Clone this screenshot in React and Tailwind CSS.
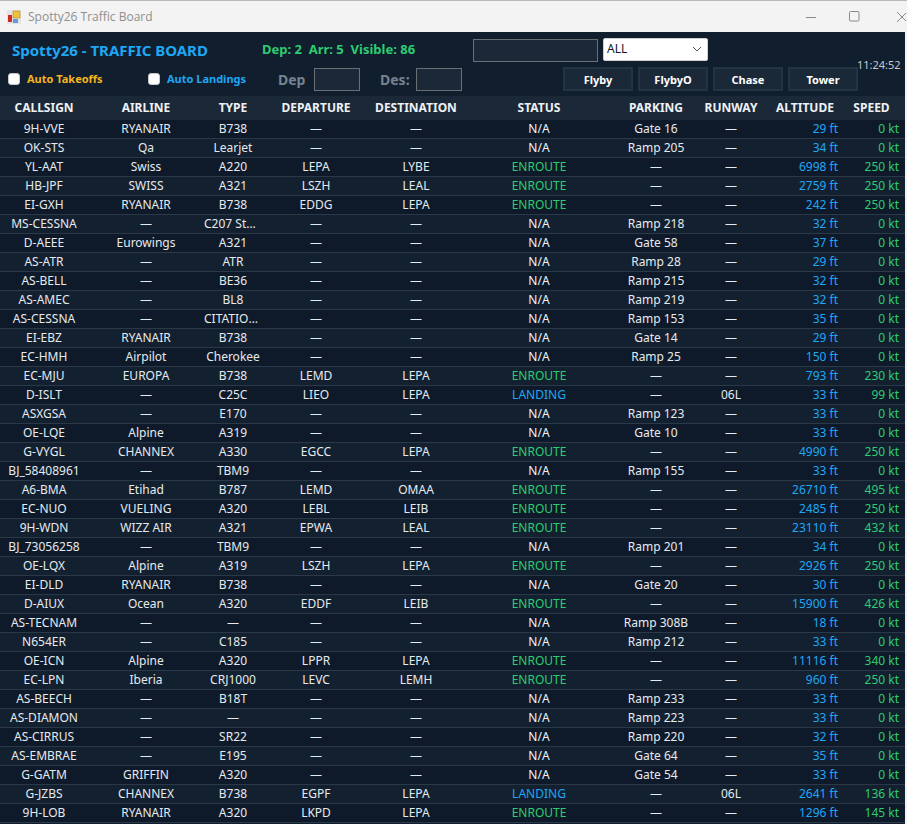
const raw = `9H-VVE|RYANAIR|B738|—|—|N/A|Gate 16|—|29|0
OK-STS|Qa|Learjet|—|—|N/A|Ramp 205|—|34|0
YL-AAT|Swiss|A220|LEPA|LYBE|ENROUTE|—|—|6998|250
HB-JPF|SWISS|A321|LSZH|LEAL|ENROUTE|—|—|2759|250
EI-GXH|RYANAIR|B738|EDDG|LEPA|ENROUTE|—|—|242|250
MS-CESSNA|—|C207 Stationair|—|—|N/A|Ramp 218|—|32|0
D-AEEE|Eurowings|A321|—|—|N/A|Gate 58|—|37|0
AS-ATR|—|ATR|—|—|N/A|Ramp 28|—|29|0
AS-BELL|—|BE36|—|—|N/A|Ramp 215|—|32|0
AS-AMEC|—|BL8|—|—|N/A|Ramp 219|—|32|0
AS-CESSNA|—|CITATION X|—|—|N/A|Ramp 153|—|35|0
EI-EBZ|RYANAIR|B738|—|—|N/A|Gate 14|—|29|0
EC-HMH|Airpilot|Cherokee|—|—|N/A|Ramp 25|—|150|0
EC-MJU|EUROPA|B738|LEMD|LEPA|ENROUTE|—|—|793|230
D-ISLT|—|C25C|LIEO|LEPA|LANDING|—|06L|33|99
ASXGSA|—|E170|—|—|N/A|Ramp 123|—|33|0
OE-LQE|Alpine|A319|—|—|N/A|Gate 10|—|33|0
G-VYGL|CHANNEX|A330|EGCC|LEPA|ENROUTE|—|—|4990|250
BJ_58408961|—|TBM9|—|—|N/A|Ramp 155|—|33|0
A6-BMA|Etihad|B787|LEMD|OMAA|ENROUTE|—|—|26710|495
EC-NUO|VUELING|A320|LEBL|LEIB|ENROUTE|—|—|2485|250
9H-WDN|WIZZ AIR|A321|EPWA|LEAL|ENROUTE|—|—|23110|432
BJ_73056258|—|TBM9|—|—|N/A|Ramp 201|—|34|0
OE-LQX|Alpine|A319|LSZH|LEPA|ENROUTE|—|—|2926|250
EI-DLD|RYANAIR|B738|—|—|N/A|Gate 20|—|30|0
D-AIUX|Ocean|A320|EDDF|LEIB|ENROUTE|—|—|15900|426
AS-TECNAM|—|—|—|—|N/A|Ramp 308B|—|18|0
N654ER|—|C185|—|—|N/A|Ramp 212|—|33|0
OE-ICN|Alpine|A320|LPPR|LEPA|ENROUTE|—|—|11116|340
EC-LPN|Iberia|CRJ1000|LEVC|LEMH|ENROUTE|—|—|960|250
AS-BEECH|—|B18T|—|—|N/A|Ramp 233|—|33|0
AS-DIAMON|—|—|—|—|N/A|Ramp 223|—|33|0
AS-CIRRUS|—|SR22|—|—|N/A|Ramp 220|—|32|0
AS-EMBRAE|—|E195|—|—|N/A|Gate 64|—|35|0
G-GATM|GRIFFIN|A320|—|—|N/A|Gate 54|—|33|0
G-JZBS|CHANNEX|B738|EGPF|LEPA|LANDING|—|06L|2641|136
9H-LOB|RYANAIR|A320|LKPD|LEPA|ENROUTE|—|—|1296|145`;
const rows = raw.split("\n").map((l) => l.split("|"));
const grid = "grid grid-cols-[88px_116px_58px_108px_92px_154px_80px_70px_72px_67px] items-center";
const heads = ["CALLSIGN", "AIRLINE", "TYPE", "DEPARTURE", "DESTINATION", "STATUS", "PARKING", "RUNWAY", "ALTITUDE", "SPEED"];

function statusColor(s) {
  if (s === "ENROUTE") return "text-[#2ecc71]";
  if (s === "LANDING") return "text-[#1ea7f5]";
  return "text-[#f0f3f6]";
}

function Row({ r, i }) {
  const [cs, al, ty, dep, des, st, pk, rw, alt, spd] = r;
  return (
    <div className={`${grid} h-[19px] border-b border-[#2a3847] text-[12px] leading-[18px] ${i % 2 === 0 ? "bg-[#0e1a29]" : "bg-[#132030]"}`}>
      <div className="text-center text-[#e6eaee] truncate">{cs}</div>
      <div className="text-center text-[#e6eaee] truncate">{al}</div>
      <div className="text-center text-[#e6eaee] truncate">{ty}</div>
      <div className="text-center text-[#e6eaee]">{dep}</div>
      <div className="text-center text-[#e6eaee]">{des}</div>
      <div className={`text-center ${statusColor(st)}`}>{st}</div>
      <div className="text-center text-[#e6eaee]">{pk}</div>
      <div className="text-center text-[#e6eaee]">{rw}</div>
      <div className="text-right text-[#1ea7f5]">{alt} ft</div>
      <div className="text-right pr-[6px] text-[#2ecc71]">{spd} kt</div>
    </div>
  );
}

function Cam({ children }) {
  return (
    <button className="w-[70px] h-[24px] bg-[#1b2838] border-2 border-[#243345] text-white text-[11px] font-bold leading-none">
      {children}
    </button>
  );
}

export default function App() {
  return (
    <div className="w-[907px] h-[824px] overflow-hidden bg-[#f3f3f3] flex flex-col font-['Noto_Sans','Open_Sans',sans-serif]">
      <div className="h-[32px] shrink-0 border-t border-[#b9b9b9] bg-[#f3f3f3] flex items-center pl-[7px] relative">
        <svg width="14" height="14" viewBox="0 0 14 14" className="shrink-0">
          <rect x="0" y="0" width="14" height="14" fill="#e4e4e4" />
          <rect x="6" y="1" width="7" height="7" fill="#f0c23a" stroke="#b08a20" strokeWidth="0.6" />
          <rect x="1" y="5" width="4" height="7" fill="#d02a20" />
          <rect x="6" y="9" width="5" height="4" fill="#5f9ae0" />
        </svg>
        <span className="ml-[7px] text-[12px] text-[#8f8f8f] font-['Open_Sans',sans-serif]">Spotty26 Traffic Board</span>
        <div className="ml-auto flex items-center pr-[1px]">
          <svg width="14" height="14" viewBox="0 0 14 14" className="mr-[31px]"><path d="M2 7.5h10" stroke="#8a8a8a" strokeWidth="1" /></svg>
          <svg width="11" height="11" viewBox="0 0 11 11" className="mr-[36px]"><rect x="0.5" y="0.5" width="9.5" height="9.5" rx="1" fill="none" stroke="#8a8a8a" strokeWidth="1" /></svg>
          <svg width="10" height="12" viewBox="0 0 10 12"><path d="M1 1l10 10M1 11L11 1" stroke="#8a8a8a" strokeWidth="1" /></svg>
        </div>
      </div>

      <div className="flex-1 min-h-0 mr-[2px] bg-[#111e2e] flex flex-col relative">
        <div className="h-[64px] shrink-0 relative">
          <div className="flex items-center h-[36px] pl-[12px]">
            <span className="w-[250px] text-[15px] font-bold text-[#1ea7f5] whitespace-nowrap">Spotty26 - TRAFFIC BOARD</span>
            <span className="w-[211px] text-[13px] font-bold text-[#2ecc71] whitespace-pre">Dep: 2  Arr: 5  Visible: 86</span>
            <div className="w-[125px] h-[23px] bg-[#1b2838] border border-[#6a6f75]" />
            <div className="ml-[5px] w-[105px] h-[23px] bg-white border border-[#d0d0d0] rounded-[2px] flex items-center justify-between px-[3px] mb-[2px]">
              <span className="text-[12px] text-[#10192a]">ALL</span>
              <svg width="10" height="6" viewBox="0 0 10 6" className="mr-[2px]"><path d="M1 1l4 4 4-4" fill="none" stroke="#555" strokeWidth="1" /></svg>
            </div>
          </div>
          <div className="flex items-center h-[24px] pl-[8px] -mt-[1px]">
            <span className="w-[12px] h-[12px] bg-white border border-[#c8c8c8] rounded-[3px] shrink-0" />
            <span className="ml-[7px] w-[121px] text-[11px] font-bold text-[#f5b51f] whitespace-nowrap">Auto Takeoffs</span>
            <span className="w-[12px] h-[12px] bg-white border border-[#c8c8c8] rounded-[3px] shrink-0" />
            <span className="ml-[7px] w-[111px] text-[11px] font-bold text-[#1ea7f5] whitespace-nowrap">Auto Landings</span>
            <span className="w-[36px] text-[14px] font-bold text-[#75828f]">Dep</span>
            <div className="w-[46px] h-[23px] bg-[#1b2838] border border-[#6a6f75]" />
            <span className="ml-[20px] w-[36px] text-[14px] font-bold text-[#75828f]">Des:</span>
            <div className="w-[46px] h-[23px] bg-[#1b2838] border border-[#6a6f75]" />
            <div className="ml-[101px] flex gap-[5px]">
              <Cam>Flyby</Cam>
              <Cam>FlybyO</Cam>
              <Cam>Chase</Cam>
              <Cam>Tower</Cam>
            </div>
          </div>
          <span className="absolute left-[857px] top-[26px] text-[11px] leading-[14px] text-[#c3c9d0]">11:24:52</span>
        </div>

        <div className={`${grid} h-[24px] shrink-0 bg-[#1b2838] text-[12px] font-bold text-[#eef1f4]`}>
          {heads.map((h, i) => (
            <div key={h} className={i === 8 ? "text-center pl-[6px]" : i === 9 ? "text-center" : "text-center"}>{h}</div>
          ))}
        </div>
        <div className="flex-1 min-h-0 overflow-hidden">
          {rows.map((r, i) => <Row key={r[0]} r={r} i={i} />)}
        </div>
      </div>
    </div>
  );
}
